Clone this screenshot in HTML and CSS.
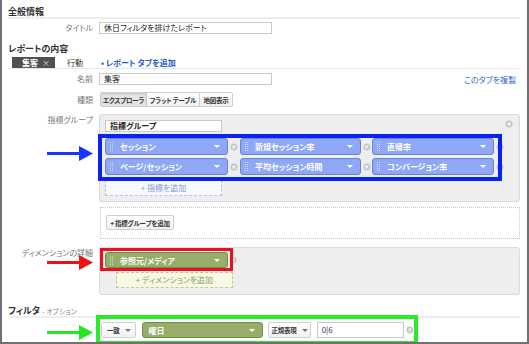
FILE: index.html
```html
<!DOCTYPE html>
<html lang="ja">
  <head>
    <meta charset="utf-8">
    <title>カスタムレポートの編集</title>
    <link rel="stylesheet" href="styles.css">
  </head>
  <body>
    <div class="frame">
      <h2 class="section-title">全般情報</h2>
      <div class="row row-title">
        <div class="row-label">タイトル</div>
        <div class="row-body">
          <span class="text-input wide">休日フィルタを排けたレポート</span>
        </div>
      </div>

      <h2 class="section-title no-line">レポートの内容</h2>
      <div class="tabs">
        <span class="tab active">集客<span class="tab-close">×</span></span>
        <span class="tab">行動</span>
        <a href="#" class="tab-add">• レポート タブを追加</a>
      </div>

      <div class="row row-name">
        <div class="row-label">名前</div>
        <div class="row-body split">
          <span class="text-input wide">集客</span>
          <a href="#" class="link">このタブを複製</a>
        </div>
      </div>

      <div class="row row-type">
        <div class="row-label">種類</div>
        <div class="row-body">
          <div class="btn-group">
            <span class="btn active">エクスプローラ</span>
            <span class="btn">フラット テーブル</span>
            <span class="btn">地図表示</span>
          </div>
        </div>
      </div>

      <div class="row row-metrics">
        <div class="row-label">指標グループ</div>
        <div class="row-body">
          <div class="group-box">
            <svg class="remove box-remove" viewBox="0 0 8 8"><circle cx="4" cy="4" r="3.5"/><path d="M2.6 2.6l2.8 2.8M5.4 2.6L2.6 5.4"/></svg>
            <span class="text-input group-name">指標グループ</span>
            <div class="chip-grid hl-blue">
              <span class="chip metric"><svg class="grip" viewBox="0 0 3 9"><circle cx="0.5" cy="0.5" r="0.5"/><circle cx="2.5" cy="0.5" r="0.5"/><circle cx="0.5" cy="2.5" r="0.5"/><circle cx="2.5" cy="2.5" r="0.5"/><circle cx="0.5" cy="4.5" r="0.5"/><circle cx="2.5" cy="4.5" r="0.5"/><circle cx="0.5" cy="6.5" r="0.5"/><circle cx="2.5" cy="6.5" r="0.5"/><circle cx="0.5" cy="8.5" r="0.5"/><circle cx="2.5" cy="8.5" r="0.5"/></svg>セッション<span class="caret"></span></span>
              <svg class="remove" viewBox="0 0 8 8"><circle cx="4" cy="4" r="3.5"/><path d="M2.6 2.6l2.8 2.8M5.4 2.6L2.6 5.4"/></svg>
              <span class="chip metric"><svg class="grip" viewBox="0 0 3 9"><circle cx="0.5" cy="0.5" r="0.5"/><circle cx="2.5" cy="0.5" r="0.5"/><circle cx="0.5" cy="2.5" r="0.5"/><circle cx="2.5" cy="2.5" r="0.5"/><circle cx="0.5" cy="4.5" r="0.5"/><circle cx="2.5" cy="4.5" r="0.5"/><circle cx="0.5" cy="6.5" r="0.5"/><circle cx="2.5" cy="6.5" r="0.5"/><circle cx="0.5" cy="8.5" r="0.5"/><circle cx="2.5" cy="8.5" r="0.5"/></svg>新規セッション率<span class="caret"></span></span>
              <svg class="remove" viewBox="0 0 8 8"><circle cx="4" cy="4" r="3.5"/><path d="M2.6 2.6l2.8 2.8M5.4 2.6L2.6 5.4"/></svg>
              <span class="chip metric"><svg class="grip" viewBox="0 0 3 9"><circle cx="0.5" cy="0.5" r="0.5"/><circle cx="2.5" cy="0.5" r="0.5"/><circle cx="0.5" cy="2.5" r="0.5"/><circle cx="2.5" cy="2.5" r="0.5"/><circle cx="0.5" cy="4.5" r="0.5"/><circle cx="2.5" cy="4.5" r="0.5"/><circle cx="0.5" cy="6.5" r="0.5"/><circle cx="2.5" cy="6.5" r="0.5"/><circle cx="0.5" cy="8.5" r="0.5"/><circle cx="2.5" cy="8.5" r="0.5"/></svg>直帰率<span class="caret"></span></span>
              <svg class="remove" viewBox="0 0 8 8"><circle cx="4" cy="4" r="3.5"/><path d="M2.6 2.6l2.8 2.8M5.4 2.6L2.6 5.4"/></svg>
              <span class="chip metric"><svg class="grip" viewBox="0 0 3 9"><circle cx="0.5" cy="0.5" r="0.5"/><circle cx="2.5" cy="0.5" r="0.5"/><circle cx="0.5" cy="2.5" r="0.5"/><circle cx="2.5" cy="2.5" r="0.5"/><circle cx="0.5" cy="4.5" r="0.5"/><circle cx="2.5" cy="4.5" r="0.5"/><circle cx="0.5" cy="6.5" r="0.5"/><circle cx="2.5" cy="6.5" r="0.5"/><circle cx="0.5" cy="8.5" r="0.5"/><circle cx="2.5" cy="8.5" r="0.5"/></svg>ページ/セッション<span class="caret"></span></span>
              <svg class="remove" viewBox="0 0 8 8"><circle cx="4" cy="4" r="3.5"/><path d="M2.6 2.6l2.8 2.8M5.4 2.6L2.6 5.4"/></svg>
              <span class="chip metric"><svg class="grip" viewBox="0 0 3 9"><circle cx="0.5" cy="0.5" r="0.5"/><circle cx="2.5" cy="0.5" r="0.5"/><circle cx="0.5" cy="2.5" r="0.5"/><circle cx="2.5" cy="2.5" r="0.5"/><circle cx="0.5" cy="4.5" r="0.5"/><circle cx="2.5" cy="4.5" r="0.5"/><circle cx="0.5" cy="6.5" r="0.5"/><circle cx="2.5" cy="6.5" r="0.5"/><circle cx="0.5" cy="8.5" r="0.5"/><circle cx="2.5" cy="8.5" r="0.5"/></svg>平均セッション時間<span class="caret"></span></span>
              <svg class="remove" viewBox="0 0 8 8"><circle cx="4" cy="4" r="3.5"/><path d="M2.6 2.6l2.8 2.8M5.4 2.6L2.6 5.4"/></svg>
              <span class="chip metric"><svg class="grip" viewBox="0 0 3 9"><circle cx="0.5" cy="0.5" r="0.5"/><circle cx="2.5" cy="0.5" r="0.5"/><circle cx="0.5" cy="2.5" r="0.5"/><circle cx="2.5" cy="2.5" r="0.5"/><circle cx="0.5" cy="4.5" r="0.5"/><circle cx="2.5" cy="4.5" r="0.5"/><circle cx="0.5" cy="6.5" r="0.5"/><circle cx="2.5" cy="6.5" r="0.5"/><circle cx="0.5" cy="8.5" r="0.5"/><circle cx="2.5" cy="8.5" r="0.5"/></svg>コンバージョン率<span class="caret"></span></span>
              <svg class="remove" viewBox="0 0 8 8"><circle cx="4" cy="4" r="3.5"/><path d="M2.6 2.6l2.8 2.8M5.4 2.6L2.6 5.4"/></svg>
            </div>
            <span class="add-slot metric-slot">+ 指標を追加</span>
          </div>
        </div>
      </div>

      <div class="row row-add-group">
        <div class="row-label"></div>
        <div class="row-body">
          <div class="dotted-box">
            <span class="btn plain">+ 指標グループを追加</span>
          </div>
        </div>
      </div>

      <div class="row row-dims">
        <div class="row-label">ディメンションの詳細</div>
        <div class="row-body">
          <div class="group-box">
            <div class="dim-wrap hl-red">
              <span class="chip dim"><svg class="grip" viewBox="0 0 3 9"><circle cx="0.5" cy="0.5" r="0.5"/><circle cx="2.5" cy="0.5" r="0.5"/><circle cx="0.5" cy="2.5" r="0.5"/><circle cx="2.5" cy="2.5" r="0.5"/><circle cx="0.5" cy="4.5" r="0.5"/><circle cx="2.5" cy="4.5" r="0.5"/><circle cx="0.5" cy="6.5" r="0.5"/><circle cx="2.5" cy="6.5" r="0.5"/><circle cx="0.5" cy="8.5" r="0.5"/><circle cx="2.5" cy="8.5" r="0.5"/></svg>参照元/メディア<span class="caret"></span></span>
              <svg class="remove" viewBox="0 0 8 8"><circle cx="4" cy="4" r="3.5"/><path d="M2.6 2.6l2.8 2.8M5.4 2.6L2.6 5.4"/></svg>
            </div>
            <span class="add-slot dim-slot">+ ディメンションを追加</span>
          </div>
        </div>
      </div>

      <h2 class="section-title filter-title">フィルタ <span class="optional">- オプション</span></h2>
      <div class="row row-filter">
        <div class="row-label"></div>
        <div class="row-body">
          <div class="filter-wrap hl-green">
            <span class="btn select match">一致<span class="caret dark"></span></span>
            <span class="chip dim filter-dim">曜日<span class="caret"></span></span>
            <span class="btn select regex">正規表現<span class="caret dark"></span></span>
            <span class="text-input filter-value">0|6</span>
            <svg class="remove" viewBox="0 0 8 8"><circle cx="4" cy="4" r="3.5"/><path d="M2.6 2.6l2.8 2.8M5.4 2.6L2.6 5.4"/></svg>
          </div>
        </div>
      </div>

      <svg class="arrow arrow-blue" viewBox="0 0 46 15"><rect x="0" y="6" width="33" height="3"/><polygon points="32,0 46,7.5 32,15"/></svg>
      <svg class="arrow arrow-red" viewBox="0 0 46 15"><rect x="0" y="6" width="33" height="3"/><polygon points="32,0 46,7.5 32,15"/></svg>
      <svg class="arrow arrow-green" viewBox="0 0 46 15"><rect x="0" y="6" width="33" height="3"/><polygon points="32,0 46,7.5 32,15"/></svg>
    </div>
  </body>
</html>
```

FILE: styles.css
```css
html, body {
  margin: 0;
  background: #fff;
}

body {
  font-family: "Noto Sans CJK JP", "Noto Sans", sans-serif;
  font-size: 8px;
  color: #333;
  font-feature-settings: "palt";
  white-space: nowrap;
}

a {
  text-decoration: none;
}

.frame {
  position: relative;
  width: 529px;
  height: 344px;
  box-sizing: border-box;
  border: 2px solid #717171;
  border-top: 0;
  padding: 0 7px 0 6px;
  overflow: hidden;
}

/* section headings */

.section-title {
  margin: 0;
  padding-top: 7px;
  height: 10px;
  font-size: 9px;
  line-height: 10px;
  font-weight: bold;
  color: #333;
  border-bottom: 2px solid #eee;
}

.section-title.no-line {
  padding-top: 10px;
  border-bottom: 0;
}

.filter-title {
  margin-top: 11px;
  padding-top: 0;
  height: 10px;
}

.filter-title .optional {
  font-weight: normal;
  font-size: 7px;
  color: #888;
}

/* form rows */

.row {
  display: grid;
  grid-template-columns: 85px 1fr;
  column-gap: 6px;
}

.row-label {
  text-align: right;
  color: #777;
  line-height: 12px;
}

.row-title {
  padding-top: 3px;
}

.row-name {
  padding-top: 4px;
}

.row-type {
  padding-top: 7px;
}

.row-type .row-label {
  line-height: 15px;
}

.row-metrics {
  margin-top: 7px;
}

.row-add-group {
  margin-top: 5px;
}

.row-dims {
  margin-top: 8px;
}

.row-filter {
  margin-top: 1px;
}

.split {
  display: flex;
  justify-content: space-between;
  align-items: center;
}

.link {
  color: #3366cc;
  margin-right: 4px;
}

.text-input {
  display: block;
  box-sizing: border-box;
  height: 12px;
  padding: 0 4px;
  border: 1px solid #c9c9c9;
  background: #fff;
  line-height: 10px;
  color: #222;
}

.text-input.wide {
  width: 173px;
}

/* tabs */

.tabs {
  display: flex;
  align-items: center;
  margin-top: 3px;
  height: 11px;
  border-bottom: 1px solid #e6e6e6;
}

.tab {
  line-height: 11px;
  margin-left: 12px;
  width: 22px;
}

.tab.active {
  box-sizing: border-box;
  display: flex;
  justify-content: space-between;
  margin-left: 4px;
  width: 43px;
  height: 11px;
  padding: 0 5px 0 10px;
  background: #505050;
  color: #fff;
  font-weight: bold;
}

.tab-close {
  font-weight: normal;
  color: #ddd;
}

.tab-add {
  margin-left: 12px;
  color: #2a5bc8;
  font-weight: bold;
}

/* buttons */

.btn-group {
  display: flex;
  margin-left: 1px;
}

.btn {
  box-sizing: border-box;
  display: flex;
  align-items: center;
  justify-content: center;
  height: 15px;
  padding: 0 2px;
  border: 1px solid #cfcfcf;
  background: linear-gradient(#fff, #f1f1f1);
  font-size: 6.5px;
  font-weight: bold;
  color: #333;
  letter-spacing: -0.2px;
}

.btn-group .btn {
  border-radius: 0;
  margin-right: -1px;
}

.btn-group .btn:first-child {
  width: 47px;
  border-radius: 2px 0 0 2px;
}

.btn-group .btn:nth-child(2) {
  width: 54px;
}

.btn-group .btn:last-child {
  width: 34px;
  border-radius: 0 2px 2px 0;
}

.btn.active {
  background: #e4e4e4;
  box-shadow: inset 0 1px 2px rgba(0, 0, 0, 0.15);
}

.btn.plain {
  display: inline-flex;
  border-radius: 2px;
  width: 68px;
}

/* grouped boxes */

.group-box {
  position: relative;
  padding: 5px 0;
  border: 1px solid #dadada;
  border-radius: 3px;
  background: #eee;
}

.group-name {
  width: 117px;
  margin-left: 5px;
  font-weight: bold;
}

.remove {
  display: block;
  width: 8px;
  height: 8px;
}

.remove circle {
  fill: #c6c6c6;
}

.remove path {
  stroke: #fff;
  stroke-width: 1.1;
}

.box-remove {
  position: absolute;
  top: 5px;
  right: 6px;
}

.chip-grid {
  display: grid;
  grid-template-columns: 123px 12px 121px 11px 122px 11px;
  row-gap: 3px;
  align-items: center;
  justify-items: center;
  box-sizing: border-box;
  width: 396px;
  margin: 6px 0 0 2px;
  padding: 0 0 2px 3px;
}

.chip {
  box-sizing: border-box;
  display: flex;
  align-items: center;
  width: 100%;
  height: 17px;
  padding: 0 7px 0 4px;
  border-radius: 3px;
  color: #fff;
  font-weight: bold;
}

.chip.metric {
  background: #8ea8f5;
  border: 1px solid #6b83d4;
}

.chip.dim {
  background: #98ad6a;
  border: 1px solid #738a48;
}

.grip {
  flex: none;
  width: 3px;
  height: 9px;
  margin-right: 7px;
  fill: rgba(255, 255, 255, 0.8);
}

.caret {
  margin-left: auto;
  border-left: 3px solid transparent;
  border-right: 3px solid transparent;
  border-top: 3px solid #fff;
}

.caret.dark {
  margin-left: 5px;
  border-top-color: #777;
}

.add-slot {
  box-sizing: border-box;
  display: block;
  height: 16px;
  line-height: 14px;
  text-align: center;
  border: 1px dashed;
}

.metric-slot {
  width: 117px;
  margin: 3px 0 0 5px;
  background: #f7f9ff;
  border-color: #b3c4ec;
  color: #7e98d8;
}

.dotted-box {
  box-sizing: border-box;
  height: 32px;
  padding: 7px 5px 0;
  margin-left: 1px;
  border: 1px dotted #c8c8c8;
}

.dim-wrap {
  display: flex;
  align-items: center;
  box-sizing: border-box;
  width: 127px;
  margin: -2px 0 0 3px;
  padding: 1px 2px 0;
}

.dim-wrap .chip {
  flex: none;
  width: 123px;
  height: 16px;
}

.dim-wrap .remove {
  flex: none;
  margin-left: 1px;
}

.row-dims .group-box {
  padding-bottom: 6px;
}

.dim-slot {
  width: 117px;
  margin: 4px 0 0 16px;
  background: #f5f9e6;
  border-color: #bccb94;
  color: #8ba35c;
}

/* filter */

.filter-wrap {
  display: flex;
  align-items: center;
  box-sizing: border-box;
  width: 314px;
  margin-left: 1px;
  padding: 3px 0 3px 1px;
}

.filter-wrap .btn {
  height: 16px;
  border-radius: 2px;
  font-weight: bold;
}

.match {
  width: 36px;
}

.filter-dim {
  width: 123px;
  height: 16px;
  margin-left: 6px;
  padding-left: 5px;
}

.regex {
  width: 43px;
  margin-left: 5px;
}

.filter-value {
  width: 89px;
  height: 16px;
  margin-left: 6px;
  line-height: 14px;
  color: #335;
}

.filter-wrap .remove {
  margin-left: 2px;
}

/* annotation highlights */

.hl-blue {
  outline: 4px solid #0a22f2;
}

.hl-red {
  outline: 3px solid #e8121c;
}

.hl-green {
  outline: 4px solid #2aeb2a;
}

.arrow {
  position: absolute;
  left: 45px;
  width: 46px;
  height: 15px;
}

.arrow-blue {
  top: 146px;
  fill: #1a34ff;
}

.arrow-red {
  top: 255px;
  fill: #ee1111;
}

.arrow-green {
  top: 325px;
  fill: #22e822;
}
```
